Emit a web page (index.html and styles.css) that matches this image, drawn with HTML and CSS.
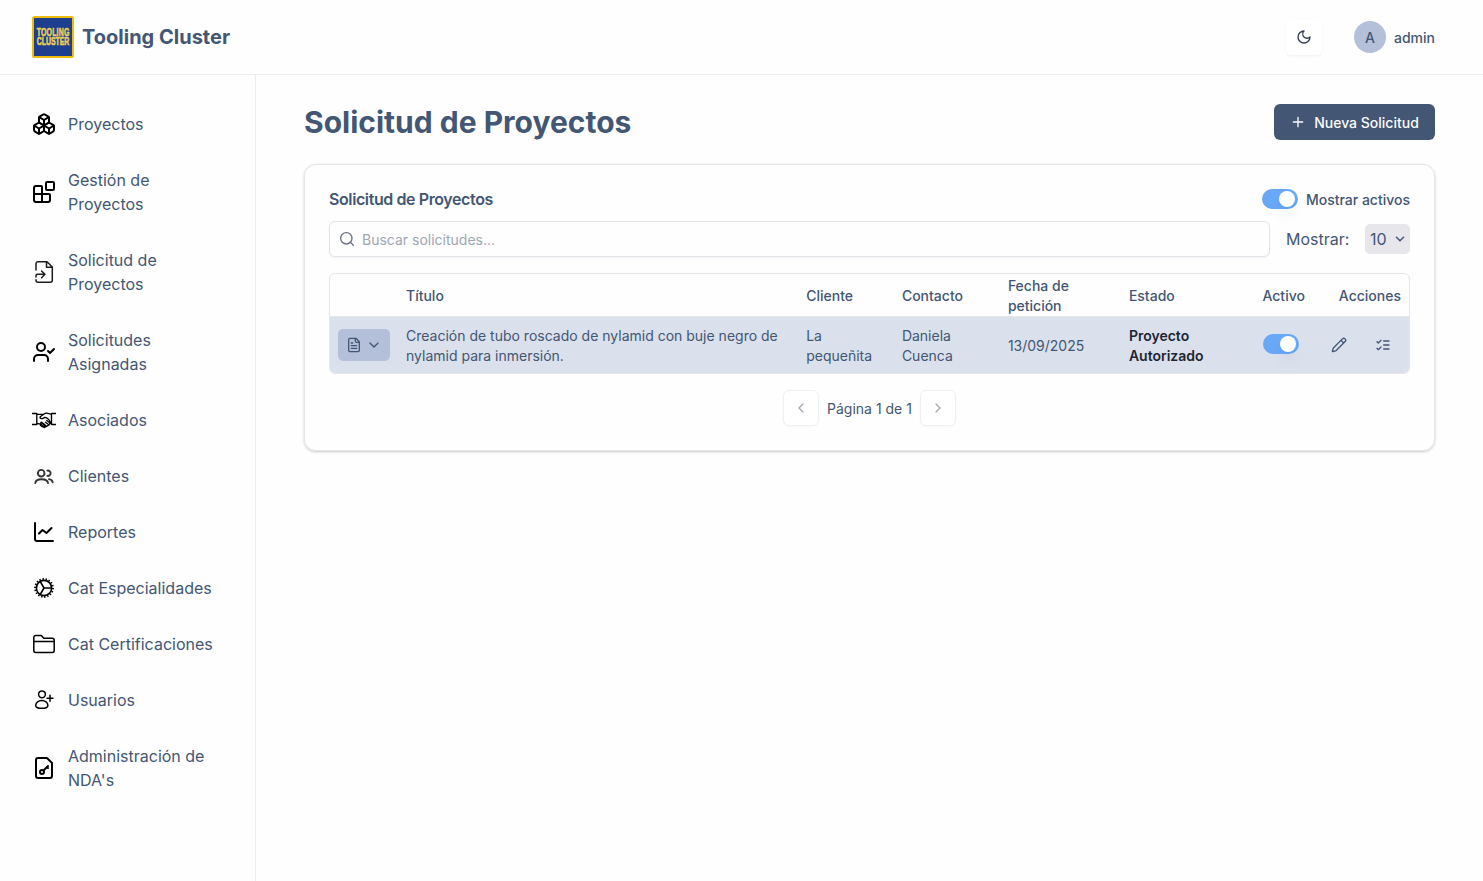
FILE: index.html
```html
<!DOCTYPE html>
<html lang="es">
<head>
<meta charset="utf-8">
<title>Tooling Cluster</title>
<link rel="stylesheet" href="styles.css">
</head>
<body>
<header class="topbar">
  <div class="brand">
    <svg class="logo" viewBox="0 0 42 42"><rect x="1" y="1" width="40" height="40" rx="1.5" fill="#1d3f8d" stroke="#eebd0b" stroke-width="2"/><g class="logo-text" transform="translate(4.7 0) scale(.62 1)"><text x="0" y="20.1" textLength="52.6">TOOLING</text><text x="0" y="29.2" textLength="52.6">CLUSTER</text></g></svg>
    <span class="brand-name">Tooling Cluster</span>
  </div>
  <div class="account">
    <button class="theme"><svg class="icon i16" viewBox="0 0 24 24"><path d="M12 3a6 6 0 0 0 9 9 9 9 0 1 1-9-9Z"/></svg></button>
    <div class="user"><span class="avatar">A</span><span class="drop">admin</span></div>
  </div>
</header>
<div class="body">
  <nav class="sidebar">
    <a class="nav-item"><svg class="icon nav-icon" viewBox="0 0 24 24"><path d="M2.97 12.92A2 2 0 0 0 2 14.63v3.24a2 2 0 0 0 .97 1.71l3 1.8a2 2 0 0 0 2.06 0L12 19v-5.5l-5-3-4.03 2.42Z"/><path d="m7 16.5-4.74-2.85M7 16.5l5-3M7 16.5v5.17M12 13.5V19l3.97 2.38a2 2 0 0 0 2.06 0l3-1.8a2 2 0 0 0 .97-1.71v-3.24a2 2 0 0 0-.97-1.71L17 10.5l-5 3Z"/><path d="m17 16.5-5-3M17 16.5l4.74-2.85M17 16.5v5.17M7.97 4.42A2 2 0 0 0 7 6.13v4.37l5 3 5-3V6.13a2 2 0 0 0-.97-1.71l-3-1.8a2 2 0 0 0-2.06 0l-3 1.8Z"/><path d="M12 8 7.26 5.15M12 8l4.74-2.85M12 13.5V8"/></svg><span>Proyectos</span></a>
    <a class="nav-item"><svg class="icon nav-icon" viewBox="0 0 24 24"><rect x="14" y="2" width="8" height="8" rx="1"/><path d="M10 22V7a1 1 0 0 0-1-1H4a2 2 0 0 0-2 2v12a2 2 0 0 0 2 2h12a2 2 0 0 0 2-2v-5a1 1 0 0 0-1-1H2"/></svg><span>Gestión de Proyectos</span></a>
    <a class="nav-item"><svg class="icon nav-icon file-in" viewBox="0 0 24 24"><path d="M4 10V3.7a2 2 0 0 1 2-2h9l5.3 5.3v13.3a2 2 0 0 1-2 2H6a2 2 0 0 1-2-2v-.6M14.5 1.8v5.5h5.6M4 17v-1.2a1.5 1.5 0 0 1 1.5-1.5h7.3M9.6 11l3.3 3.3-3.3 3.4"/></svg><span>Solicitud de Proyectos</span></a>
    <a class="nav-item"><svg class="icon nav-icon" viewBox="0 0 24 24"><path d="M2 21v-2a4 4 0 0 1 4-4h6a4 4 0 0 1 4 4v2"/><circle cx="9" cy="7" r="4"/><path d="m16 11 2 2 4-4"/></svg><span>Solicitudes Asignadas</span></a>
    <a class="nav-item"><svg class="icon nav-icon handshake" viewBox="0 0 24 24"><path d="M0 5.5h4.8v11H0M24 5.5h-4.5v11H24M4.8 6.3h6M4.8 15.3l2.4.6M19.5 6.3l-3.7-1c-1.7-.4-3.1.2-4.4 1.2L8.2 8.7c-.6 1.8 1.4 2.4 2.8 1.6l2-1c2 .3 4.4 2.6 5.3 5l1.2.4M8.1 15.8l1.2-1.7 1.3 1-2 2.4ZM10.6 15.1l1.4 1-2 2.4-1.3-1M12 16.1l1.2.9-1.6 2.2-1.5-.8M13.2 17l.6.9-1.1 1.7-1.2-.4M14 18.6l3-1.7M13.5 14.2l3.3 2.5 1.5-1.2M14.8 12.5l3.2 2.6"/></svg><span>Asociados</span></a>
    <a class="nav-item"><svg class="icon nav-icon clients" viewBox="0 0 24 24"><circle cx="9.2" cy="9.2" r="3.3"/><path d="M3.3 19c.3-2.5 2.5-3.8 6.2-3.8s6.2 1.3 6.5 3.8M15.4 6.6a2.7 2.7 0 1 1 0 5.3M17 15.1c2 .3 3.4 1.5 3.7 3.2"/></svg><span>Clientes</span></a>
    <a class="nav-item"><svg class="icon nav-icon" viewBox="0 0 24 24"><path d="M3 3v16a2 2 0 0 0 2 2h16M7 13.5l3.5-3.5 4 3 5-5"/></svg><span>Reportes</span></a>
    <a class="nav-item"><svg class="icon nav-icon cog" viewBox="0 0 24 24"><circle cx="12" cy="12" r="7.6"/><circle class="teeth" cx="12" cy="12" r="9" pathLength="36"/><path d="M12 12h7.3M12 12 8.3 5.7M12 12l-3.7 6.3"/></svg><span>Cat Especialidades</span></a>
    <a class="nav-item"><svg class="icon nav-icon thin" viewBox="0 0 24 24"><path d="M1.8 9V5.5a2 2 0 0 1 2-2h5.5l2.4 2.7h8.5a2 2 0 0 1 2 2v10.3a2 2 0 0 1-2 2H3.8a2 2 0 0 1-2-2V9Zm0 .5h20.4"/></svg><span>Cat Certificaciones</span></a>
    <a class="nav-item"><svg class="icon nav-icon thin" viewBox="0 0 24 24"><circle cx="10" cy="6.3" r="3.4"/><path d="M3.7 17.4c0-2.8 2.9-5 6.1-5s6.1 2.2 6.1 5c0 2-2.8 2.9-6.1 2.9s-6.1-.9-6.1-2.9ZM18 7.3v6M15 10.3h6"/></svg><span>Usuarios</span></a>
    <a class="nav-item"><svg class="icon nav-icon" viewBox="0 0 24 24"><path d="M15 2H6a2 2 0 0 0-2 2v16a2 2 0 0 0 2 2h12a2 2 0 0 0 2-2V7Z"/><circle cx="10" cy="16" r="2"/><path d="m16 10-4.5 4.5M15 11l1 1"/></svg><span>Administración de NDA's</span></a>
  </nav>
  <main class="main">
    <div class="page-head">
      <h1>Solicitud de Proyectos</h1>
      <button class="primary"><svg class="icon i16 plus" viewBox="0 0 24 24"><path d="M5 12h14M12 5v14"/></svg><span class="drop">Nueva Solicitud</span></button>
    </div>
    <section class="card">
      <div class="card-head"><h2>Solicitud de Proyectos</h2><label class="active-filter"><span class="switch"></span><span class="drop">Mostrar activos</span></label></div>
      <div class="filters">
        <div class="search"><svg class="icon i16" viewBox="0 0 24 24"><circle cx="11" cy="11" r="8.5"/><path d="m21.5 21.5-4.5-4.5"/></svg><span class="drop">Buscar solicitudes...</span></div>
        <span class="show">Mostrar:</span>
        <div class="select">10<svg class="icon" viewBox="0 0 10 10"><path d="m1.5 3.3 3.5 3.5 3.5-3.5"/></svg></div>
      </div>
      <div class="table">
        <div class="row head"><span></span><span>Título</span><span>Cliente</span><span>Contacto</span><span>Fecha de petición</span><span>Estado</span><span>Activo</span><span class="right">Acciones</span></div>
        <div class="row data">
          <span><button class="doc"><svg class="icon i16" viewBox="0 0 24 24"><path d="M15 2H6a2 2 0 0 0-2 2v16a2 2 0 0 0 2 2h12a2 2 0 0 0 2-2V7ZM14 2v4a2 2 0 0 0 2 2h4M10 9H8M16 13H8M16 17H8"/></svg><svg class="icon i16" viewBox="0 0 24 24"><path d="m6 9 6 6 6-6"/></svg></button></span>
          <span>Creación de tubo roscado de nylamid con buje negro de nylamid para inmersión.</span>
          <span>La pequeñita</span><span>Daniela Cuenca</span><span>13/09/2025</span><span class="state">Proyecto Autorizado</span>
          <span class="switch-cell"><i class="switch"></i></span>
          <span class="actions"><svg class="icon i16" viewBox="0 0 24 24"><path d="M21.17 6.81a1 1 0 0 0-3.99-3.99L3.84 16.17a2 2 0 0 0-.5.83l-1.32 4.35a.5.5 0 0 0 .62.62l4.35-1.32a2 2 0 0 0 .83-.5ZM15 5l4 4"/></svg><svg class="icon i16" viewBox="0 0 24 24"><path d="m3 17 2 2 4-4M3 7l2 2 4-4M13 6h8M13 12h8M13 18h8"/></svg></span>
        </div>
      </div>
      <div class="pager"><button><svg class="icon i16" viewBox="0 0 24 24"><path d="m15 18-6-6 6-6"/></svg></button><span class="drop">Página 1 de 1</span><button><svg class="icon i16" viewBox="0 0 24 24"><path d="m9 18 6-6-6-6"/></svg></button></div>
    </section>
  </main>
</div>
</body>
</html>
```
FILE: styles.css
```css
* { box-sizing: border-box; }
body { margin: 0; height: 881px; display: flex; flex-direction: column; overflow: hidden; background: #fefefe; color: #435673; font: 400 14px/20px Inter, sans-serif; }
button { font: inherit; color: inherit; margin: 0; padding: 0; border: 0; display: flex; align-items: center; justify-content: center; }
h1, h2 { margin: 0; }
.icon { display: block; flex: none; fill: none; stroke: currentColor; stroke-width: 2; stroke-linecap: round; stroke-linejoin: round; }
.i16 { width: 16px; height: 16px; }
.drop { padding-top: 2px; }
.topbar { height: 75px; flex: none; padding: 0 48px 0 32px; border-bottom: 1px solid #ebecf1; display: flex; align-items: center; justify-content: space-between; }
.brand { display: flex; align-items: center; gap: 8px; }
.brand-name { font-size: 20px; line-height: 28px; font-weight: 700; }
.logo { width: 42px; height: 42px; overflow: visible; }
.logo-text { font: 700 11.2px "Liberation Sans", sans-serif; fill: #ebcf58; stroke: #ebcf58; stroke-width: .6; }
.account { display: flex; align-items: center; gap: 32px; }
.theme { width: 36px; height: 36px; border-radius: 6px; color: #303c50; background: #fff; box-shadow: 0 1px 3px rgba(0,0,0,.06); }
.user { display: flex; align-items: center; gap: 8px; font-weight: 500; }
.avatar { width: 32px; height: 32px; padding-top: 2px; border-radius: 50%; background: #b4c0da; display: flex; align-items: center; justify-content: center; }
.body { display: flex; flex: 1; }
.sidebar { width: 256px; border-right: 1px solid #ebecf1; padding: 21px 16px; display: flex; flex-direction: column; }
.nav-item { display: flex; align-items: center; gap: 12px; padding: 16px; font-size: 16px; line-height: 24px; }
.nav-icon { width: 24px; height: 24px; color: #000; }
.thin { stroke-width: 1.5; }
.file-in { stroke-width: 1.5; color: #1c1c1c; }
.clients { stroke-width: 1.9; color: #333; }
.handshake { stroke-width: 1.35; }
.cog { stroke-width: 1.6; }
.teeth { stroke-width: 1.8; stroke-linecap: butt; stroke-dasharray: .9 1.1; }
.main { flex: 1; padding: 29px 48px; }
.page-head { height: 36px; display: flex; align-items: center; justify-content: space-between; }
.page-head h1 { font-size: 30px; line-height: 36px; font-weight: 700; }
.primary { width: 161px; height: 36px; gap: 8px; border-radius: 6px; background: #435673; color: #fafbfd; font-weight: 500; }
.card { margin-top: 24px; height: 287px; padding: 24px; border: 1px solid #e3e5e9; border-radius: 12px; box-shadow: 0 1px 3px rgba(0,0,0,.14), 0 1px 2px rgba(0,0,0,.08); }
.card-head { display: flex; justify-content: space-between; align-items: center; height: 20px; }
.card-head h2 { font-size: 16px; line-height: 20px; font-weight: 600; letter-spacing: -.4px; }
.active-filter { display: flex; align-items: center; gap: 8px; font-weight: 500; }
.switch { display: block; width: 36px; height: 20px; padding: 2px; border-radius: 10px; background: #68a8f7; }
.switch::after { content: ""; display: block; width: 16px; height: 16px; margin-left: 15px; border-radius: 50%; background: #fff; box-shadow: 0 10px 15px -3px rgba(0,0,0,.1), 0 4px 6px -4px rgba(0,0,0,.1); }
.filters { margin-top: 12px; display: flex; align-items: center; height: 36px; }
.search { width: 941px; height: 36px; border: 1px solid #e1e3e8; border-radius: 6px; box-shadow: 0 1px 2px rgba(0,0,0,.05); padding-left: 9px; display: flex; align-items: center; gap: 7px; color: #a0a6b4; }
.search .icon { color: #6b7280; }
.show { margin-left: 16px; font-size: 16px; }
.select { margin-left: auto; width: 45px; height: 30px; border-radius: 5px; background: #e6e6eb; padding: 0 5px; display: flex; align-items: center; justify-content: space-between; font-size: 16px; }
.select .icon { width: 10px; height: 10px; stroke-width: 1.5; }
.table { margin-top: 16px; height: 101px; border: 1px solid #e4e5e9; border-radius: 6px; overflow: hidden; }
.row { display: grid; grid-template-columns: 68px 400.2px 95.7px 106px 121px 133.6px 58.5px 1fr; align-items: center; }
.row > span { padding: 0 8px; }
.head { height: 43px; padding-top: 2px; font-weight: 500; border-bottom: 1px solid #e4e6ea; }
.head .right { text-align: right; }
.data { height: 56px; background: #dae0ec; padding-top: 1px; }
.doc { width: 52px; height: 32px; gap: 4px; border-radius: 5px; background: #b4c0da; margin-top: -1px; }
.state { font-weight: 600; color: #1e2633; }
.row > .switch-cell { margin-top: -3px; padding-left: 9px; }
.row > .actions { display: flex; justify-content: space-between; margin-top: -2px; padding: 0 18px; }
.pager { margin-top: 16px; display: flex; justify-content: center; align-items: center; gap: 8px; }
.pager button { width: 36px; height: 36px; border: 1px solid #eff0f3; border-radius: 6px; background: #fff; color: #a0a9b8; box-shadow: 0 1px 2px rgba(0,0,0,.03); }
```
